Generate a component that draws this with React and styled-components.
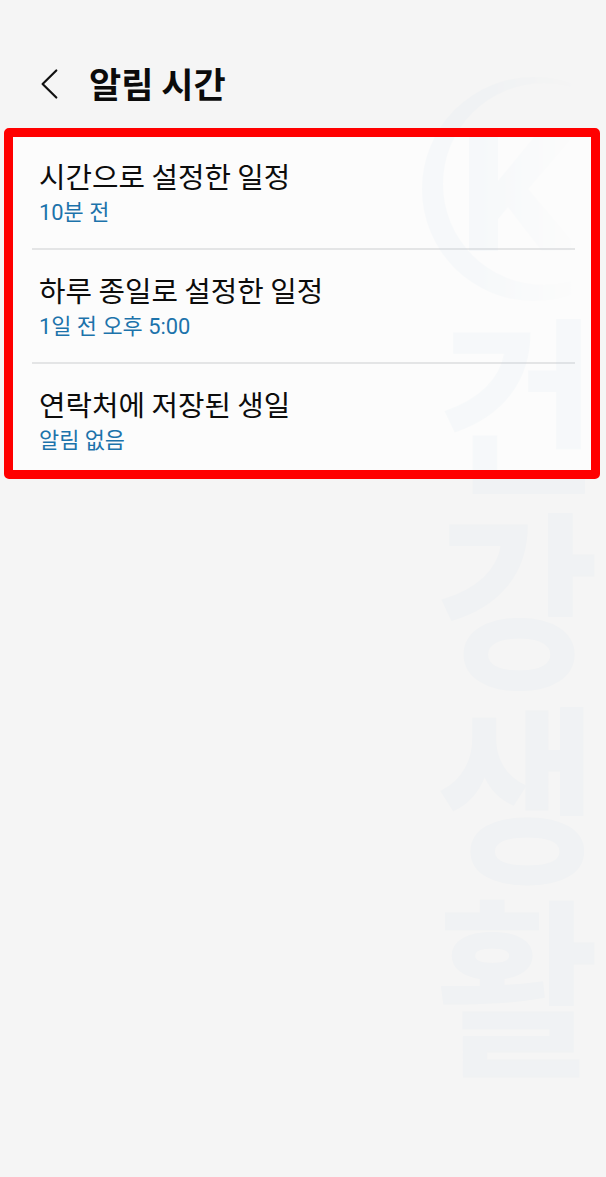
import React from "react";
import styled, { createGlobalStyle } from "styled-components";

const GlobalStyle = createGlobalStyle`
  * { box-sizing: border-box; }
  body {
    margin: 0;
    background: #f5f5f5;
    font-family: Roboto, "Noto Sans CJK KR", sans-serif;
  }
`;

const Screen = styled.main`
  position: relative;
  width: 606px;
  height: 1177px;
  overflow: hidden;
  background: #f5f5f5;
`;

const Header = styled.header`
  display: flex;
  align-items: center;
  height: 128px;
  padding: 40px 0 0 40px;
`;

const BackButton = styled.button`
  display: flex;
  width: 20px;
  height: 32px;
  padding: 0;
  border: 0;
  background: none;
`;

const Title = styled.h1`
  margin: 0 0 2px 29px;
  font-family: "Noto Sans CJK KR", sans-serif;
  font-size: 35px;
  font-weight: 700;
  line-height: 44px;
  color: #0b0b0b;
  white-space: nowrap;
`;

const Panel = styled.section`
  position: relative;
  width: 596px;
  height: 351px;
  margin-left: 4px;
  border-radius: 5px;
  padding: 9px 25px 9px 28px;
  background: #fcfcfc;

  &::after {
    content: "";
    position: absolute;
    inset: 0;
    z-index: 2;
    border: 9px solid #ff0000;
    border-radius: 5px;
    pointer-events: none;
  }
`;

const Row = styled.div`
  display: flex;
  flex-direction: column;
  height: ${(p) => (p.$first ? 113 : 114)}px;
  padding: ${(p) => (p.$first ? 20 : 21)}px 0 0 7px;
  border-bottom: ${(p) => (p.$last ? "0" : "2px solid #e4e5e6")};
`;

const Label = styled.span`
  font-family: "Noto Sans CJK KR", sans-serif;
  font-size: 28.8px;
  line-height: 38px;
  color: #0c0c0c;
  white-space: nowrap;
`;

const Value = styled.span`
  margin-top: 2px;
  font-size: 21.9px;
  line-height: 32px;
  color: #1c73ab;
  white-space: nowrap;
`;

const Watermark = styled.div`
  position: absolute;
  z-index: 1;
  top: 77px;
  left: 422px;
  width: 184px;
  color: #b4d2e8;
  opacity: 0.07;
  pointer-events: none;
`;

const Emblem = styled.svg`
  display: block;
  width: 184px;
  height: 224px;
`;

const Brand = styled.div`
  width: 170px;
  margin: 11px 0 0 16px;
  font-family: "Noto Sans CJK KR", sans-serif;
  font-size: 190px;
  font-weight: 700;
  line-height: 170px;
  letter-spacing: 4px;
  white-space: nowrap;
  writing-mode: vertical-rl;
  text-orientation: upright;
  transform: scaleX(0.93);
  transform-origin: left top;
  -webkit-text-stroke: 1px currentColor;
`;

const rows = [
  ["시간으로 설정한 일정", "10분 전"],
  ["하루 종일로 설정한 일정", "1일 전 오후 5:00"],
  ["연락처에 저장된 생일", "알림 없음"],
];

export default function App() {
  return (
    <Screen>
      <GlobalStyle />
      <Header>
        <BackButton aria-label="뒤로">
          <svg width="20" height="32" viewBox="0 0 20 32" fill="none">
            <path
              d="M16.3 2.5 2.6 16l13.7 13.5"
              stroke="#111"
              strokeWidth="2.2"
              strokeLinecap="round"
              strokeLinejoin="round"
            />
          </svg>
        </BackButton>
        <Title>알림 시간</Title>
      </Header>
      <Panel>
        {rows.map(([label, value], i) => (
          <Row key={label} $first={i === 0} $last={i === rows.length - 1}>
            <Label>{label}</Label>
            <Value>{value}</Value>
          </Row>
        ))}
      </Panel>
      <Watermark aria-hidden="true">
        <Emblem viewBox="0 0 184 224">
          <defs>
            <linearGradient id="fade" gradientUnits="userSpaceOnUse" x1="60" x2="150" y1="0" y2="0">
              <stop offset="0" stopColor="currentColor" />
              <stop offset="1" stopColor="currentColor" stopOpacity="0" />
            </linearGradient>
          </defs>
          <path
            fill="url(#fade)"
            fillRule="evenodd"
            d="M112 0A112 112 0 1 0 112 224A112 112 0 1 0 112 0ZM122 6A101 101 0 1 1 122 208A101 101 0 1 1 122 6Z"
          />
          <path
            fill="url(#fade)"
            d="M47 58h29v46l38-46h38l-46 54 52 62h-38l-34-44-10 12v32H47Z"
          />
        </Emblem>
        <Brand>건강생활</Brand>
      </Watermark>
    </Screen>
  );
}
